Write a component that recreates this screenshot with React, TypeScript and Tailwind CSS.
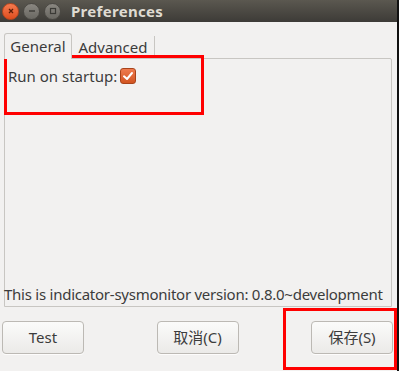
import React from "react";

const sans = { fontFamily: '"Noto Sans", "Noto Sans CJK SC", sans-serif' };

function TitleButton({ kind }: { kind: "close" | "min" | "max" }) {
  const isClose = kind === "close";
  return (
    <div
      className={
        "w-[17px] h-[17px] rounded-full flex items-center justify-center " +
        (isClose
          ? "bg-gradient-to-b from-[#f47a4e] to-[#dd4d1d] border border-[#b7461f]"
          : "bg-gradient-to-b from-[#8a8781] to-[#6a6862] border border-[#4b4944]")
      }
    >
      <svg width="10" height="10" viewBox="0 0 10 10">
        {kind === "close" && (
          <path d="M3 3 L7 7 M7 3 L3 7" stroke="#5b1c07" strokeWidth="1.3" />
        )}
        {kind === "min" && <path d="M2 5 H8" stroke="#3b3a36" strokeWidth="1.4" />}
        {kind === "max" && (
          <rect x="2.5" y="2.5" width="5" height="5" fill="none" stroke="#3b3a36" strokeWidth="1.2" />
        )}
      </svg>
    </div>
  );
}

function Button({ label }: { label: string }) {
  return (
    <button className="w-[82px] h-[33px] rounded-[4px] border border-[#bcb9b4] bg-gradient-to-b from-[#fbfbfa] to-[#ebeae8] text-[15px] text-[#3c3c3c] shadow-[0_1px_0_rgba(255,255,255,0.8)]">
      {label}
    </button>
  );
}

export default function App() {
  return (
    <div
      className="relative w-[399px] h-[371px] bg-[#f2f1f0] flex flex-col border-r-[2px] border-[#111] overflow-hidden"
      style={sans}
    >
      {/* Title bar */}
      <div className="h-[22px] bg-gradient-to-b from-[#5b5850] to-[#3d3b37] flex items-center pl-[2px]">
        <div className="flex gap-[4px]">
          <TitleButton kind="close" />
          <TitleButton kind="min" />
          <TitleButton kind="max" />
        </div>
        <span className="ml-[10px] text-[15px] font-bold text-[#dfdbd2] tracking-[0.3px]">Preferences</span>
      </div>

      {/* Tabs */}
      <div className="flex pl-[4px] pr-[6px] mt-[11px]">
        <div className="w-[68px] h-[26px] border border-b-0 border-[#c8c6c2] rounded-t-[3px] bg-[#f2f1f0] flex items-center justify-center text-[15px] text-[#3c3c3c] relative z-10 -mb-px">
          General
        </div>
        <div className="w-[83px] h-[22px] mt-[3px] border-r border-[#c8c6c2] flex items-center justify-center text-[15px] text-[#3c3c3c]">
          Advanced
        </div>
      </div>

      {/* Notebook page */}
      <div className="ml-[4px] mr-[5px] h-[249px] border border-[#c8c6c2] rounded-tr-[2px] flex flex-col justify-between">
        <div className="flex items-center pl-[3px] pt-[6px] gap-[3px]">
          <span className="text-[15px] text-[#3c3c3c]">Run on startup:</span>
          <div className="w-[16px] h-[16px] rounded-[3px] bg-gradient-to-b from-[#ef7b4e] to-[#d2541f] border border-[#a8431a] flex items-center justify-center">
            <svg width="12" height="12" viewBox="0 0 12 12">
              <path d="M2 6.3 L5 9 L10 3" fill="none" stroke="#fff" strokeWidth="2" strokeLinecap="round" strokeLinejoin="round" />
            </svg>
          </div>
        </div>
        <div className="-ml-px mb-[1px] text-[15px] text-[#3c3c3c] whitespace-nowrap tracking-[-0.25px]">
          This is indicator-sysmonitor version: 0.8.0~development
        </div>
      </div>

      {/* Buttons */}
      <div className="flex justify-between pl-[2px] pr-[4px] mt-[14px]">
        <Button label="Test" />
        <Button label="取消(C)" />
        <Button label="保存(S)" />
      </div>

      {/* Annotation boxes */}
      <div className="absolute left-[4px] top-[55px] w-[200px] h-[60px] border-[3px] border-[#ff0000]" />
      <div className="absolute left-[283px] top-[308px] w-[114px] h-[62px] border-[3px] border-[#ff0000]" />
    </div>
  );
}
